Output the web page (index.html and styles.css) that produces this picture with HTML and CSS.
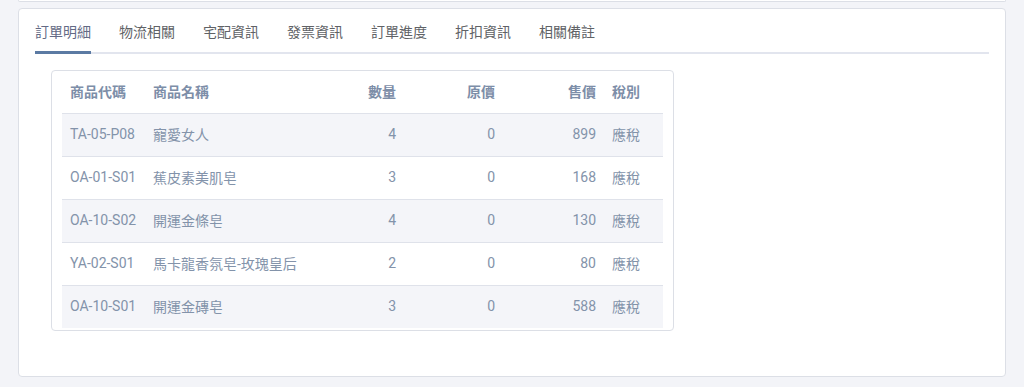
FILE: index.html
```html
<!DOCTYPE html>
<html lang="zh-Hant">
<head>
<meta charset="utf-8">
<title>訂單明細</title>
<link rel="stylesheet" href="styles.css">
</head>
<body>
<div class="top-card"></div>
<div class="card">
  <div class="tabs">
    <div class="tab active">訂單明細</div>
    <div class="tab">物流相關</div>
    <div class="tab">宅配資訊</div>
    <div class="tab">發票資訊</div>
    <div class="tab">訂單進度</div>
    <div class="tab">折扣資訊</div>
    <div class="tab">相關備註</div>
  </div>
  <div class="table-card">
    <table class="items">
      <colgroup>
        <col class="c-code"><col class="c-name"><col class="c-qty"><col class="c-orig"><col class="c-price"><col class="c-tax">
      </colgroup>
      <thead>
        <tr><th>商品代碼</th><th>商品名稱</th><th class="num">數量</th><th class="num">原價</th><th class="num">售價</th><th>稅別</th></tr>
      </thead>
      <tbody>
        <tr class="stripe"><td>TA-05-P08</td><td>寵愛女人</td><td class="num">4</td><td class="num">0</td><td class="num">899</td><td>應稅</td></tr>
        <tr><td>OA-01-S01</td><td>蕉皮素美肌皂</td><td class="num">3</td><td class="num">0</td><td class="num">168</td><td>應稅</td></tr>
        <tr class="stripe"><td>OA-10-S02</td><td>開運金條皂</td><td class="num">4</td><td class="num">0</td><td class="num">130</td><td>應稅</td></tr>
        <tr><td>YA-02-S01</td><td>馬卡龍香氛皂-玫瑰皇后</td><td class="num">2</td><td class="num">0</td><td class="num">80</td><td>應稅</td></tr>
        <tr class="stripe last"><td>OA-10-S01</td><td>開運金磚皂</td><td class="num">3</td><td class="num">0</td><td class="num">588</td><td>應稅</td></tr>
      </tbody>
    </table>
  </div>
</div>
</body>
</html>
```

FILE: styles.css
```css
html, body {
  margin: 0;
  padding: 0;
  background: #f3f4f8;
  font-family: Roboto, "Noto Sans CJK TC", sans-serif;
  font-size: 14px;
}

.top-card {
  height: 1px;
  margin: 0 18px 0 18px;
  width: 986px;
  background: #ffffff;
  border: 1px solid #dcdfe6;
  border-top: none;
  border-radius: 0 0 4px 4px;
}

.card {
  margin: 6px 0 0 18px;
  width: 954px;
  height: 367px;
  background: #ffffff;
  border: 1px solid #dcdfe6;
  border-radius: 4px;
  padding: 0 16px;
}

.tabs {
  display: flex;
  height: 43px;
  border-bottom: 2px solid #e2e5ee;
}

.tab {
  box-sizing: border-box;
  height: 45px;
  margin-bottom: -2px;
  margin-right: 28px;
  line-height: 44px;
  color: #606266;
  font-family: "Noto Sans CJK TC", sans-serif;
  font-size: 14px;
  letter-spacing: 0;
}

.tab.active {
  color: #636a85;
  border-bottom: 3px solid #5b7aa3;
}

.table-card {
  margin: 16px 0 0 16px;
  width: 602px;
  height: 259px;
  border: 1px solid #dcdfe6;
  border-radius: 4px;
  padding: 0 9px 0 10px;
}

.items {
  width: 601px;
  border-collapse: collapse;
  table-layout: fixed;
  color: #8393aa;
}

.c-code { width: 83px; }
.c-name { width: 179px; }
.c-qty { width: 80px; }
.c-orig { width: 99px; }
.c-price { width: 101px; }
.c-tax { width: 59px; }

.items th {
  height: 40px;
  padding: 0 8px 2px;
  text-align: left;
  font-weight: bold;
  color: #7d8ea8;
  white-space: nowrap;
}

.items td {
  height: 40px;
  padding: 0 8px 2px;
  border-top: 1px solid #dfe2ea;
  white-space: nowrap;
}

.items .num {
  text-align: right;
}

.items tr.stripe td {
  background: #f4f5f9;
}
```
